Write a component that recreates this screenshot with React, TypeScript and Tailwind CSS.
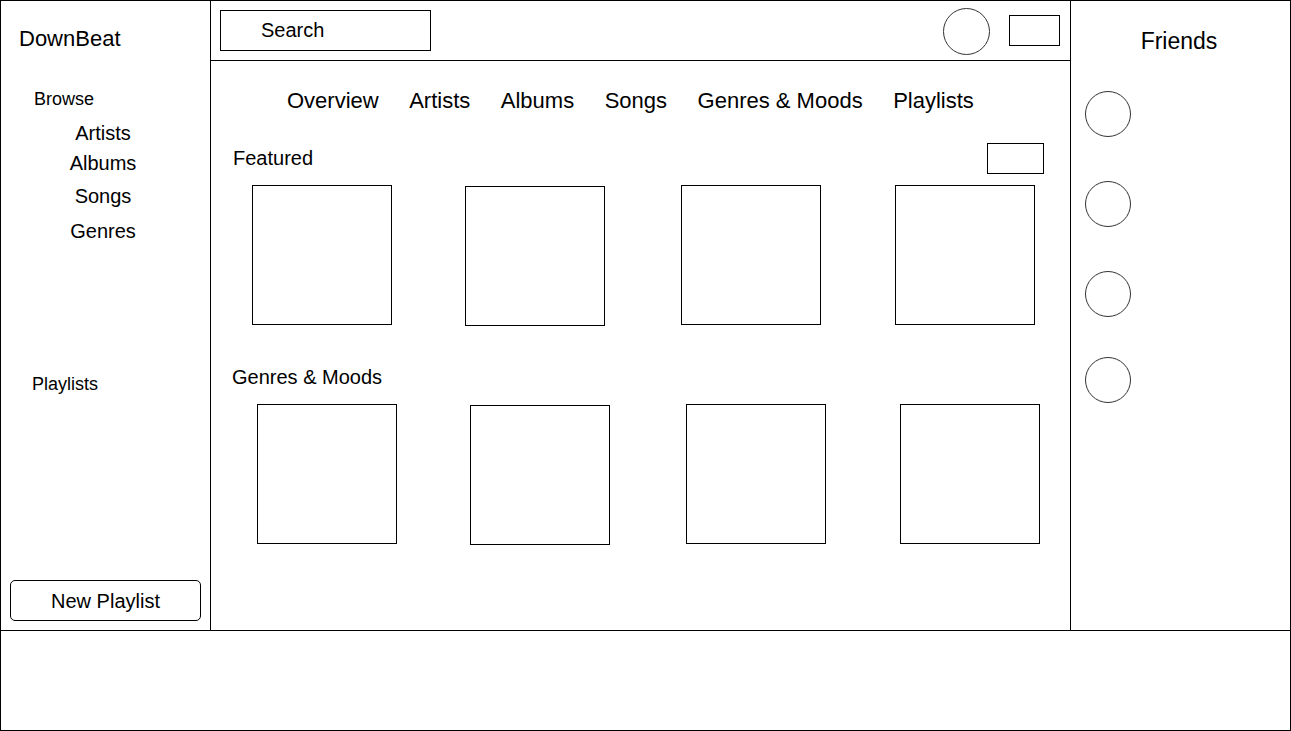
export default function App() {
  const tabs = ["Overview", "Artists", "Albums", "Songs", "Genres & Moods", "Playlists"];

  return (
    <main className="w-[1291px] h-[731px] border border-black bg-white text-black flex flex-col font-['Liberation_Sans',Arial,sans-serif]">
      <div className="h-[630px] border-b border-black flex">
        {/* Left sidebar */}
        <aside className="w-[210px] border-r border-black flex flex-col">
          <div className="mt-[27px] ml-[18px] text-[22px] leading-none">DownBeat</div>
          <div className="mt-[40px] ml-[33px] text-[18px] leading-none">Browse</div>
          <div className="pr-[5px] text-center text-[20px] leading-none">
            <div className="mt-[15px]">Artists</div>
            <div className="mt-[10px]">Albums</div>
            <div className="mt-[13px]">Songs</div>
            <div className="mt-[15px]">Genres</div>
          </div>
          <div className="mt-[134px] ml-[31px] text-[18px] leading-none">Playlists</div>
          <div className="flex-1" />
          {/* New playlist button */}
          <button className="ml-[9px] mb-[9px] w-[191px] h-[41px] border border-black rounded-[5px] text-[20px] leading-none">
            New Playlist
          </button>
        </aside>

        {/* Center */}
        <section className="w-[860px] border-r border-black flex flex-col">
          <header className="h-[60px] border-b border-black flex items-start">
            <div className="ml-[9px] mt-[9px] w-[211px] h-[41px] border border-black flex items-center pl-[40px] pb-[1px] text-[20px] leading-none">
              Search
            </div>
            <div className="flex-1" />
            <div className="mt-[7px] w-[47px] h-[47px] rounded-full border border-[#333]" />
            <div className="ml-[19px] mt-[14px] mr-[10px] w-[51px] h-[31px] border border-black" />
          </header>

          <nav className="mt-[29px] pl-[76px] flex gap-[30.5px] text-[22px] leading-none">
            {tabs.map((t) => (
              <span key={t}>{t}</span>
            ))}
          </nav>

          {/* Featured */}
          <div className="mt-[31px] pl-[22px] pr-[26px] flex items-center justify-between">
            <span className="mb-[2px] text-[20px] leading-none">Featured</span>
            <div className="w-[57px] h-[31px] border border-black" />
          </div>
          <div className="mt-[11px] pl-[41px] flex items-start">
            <div className="w-[140px] h-[140px] border border-black" />
            <div className="ml-[73px] mt-[1px] w-[140px] h-[140px] border border-black" />
            <div className="ml-[76px] w-[140px] h-[140px] border border-black" />
            <div className="ml-[74px] w-[140px] h-[140px] border border-black" />
          </div>

          {/* Genres & Moods */}
          <div className="mt-[41px] pl-[21px] text-[20px] leading-none">Genres &amp; Moods</div>
          <div className="mt-[17px] pl-[46px] flex items-start">
            <div className="w-[140px] h-[140px] border border-black" />
            <div className="ml-[73px] mt-[1px] w-[140px] h-[140px] border border-black" />
            <div className="ml-[76px] w-[140px] h-[140px] border border-black" />
            <div className="ml-[74px] w-[140px] h-[140px] border border-black" />
          </div>
        </section>

        {/* Friends */}
        <aside className="flex-1 flex flex-col">
          <div className="mt-[29px] pr-[3px] text-center text-[23px] leading-none">Friends</div>
          <div className="ml-[14px] mt-[38px] w-[46px] h-[46px] rounded-full border border-[#333]" />
          <div className="ml-[14px] mt-[44px] w-[46px] h-[46px] rounded-full border border-[#333]" />
          <div className="ml-[14px] mt-[44px] w-[46px] h-[46px] rounded-full border border-[#333]" />
          <div className="ml-[14px] mt-[40px] w-[46px] h-[46px] rounded-full border border-[#333]" />
        </aside>
      </div>

      {/* Player bar */}
      <footer className="flex-1" />
    </main>
  );
}
